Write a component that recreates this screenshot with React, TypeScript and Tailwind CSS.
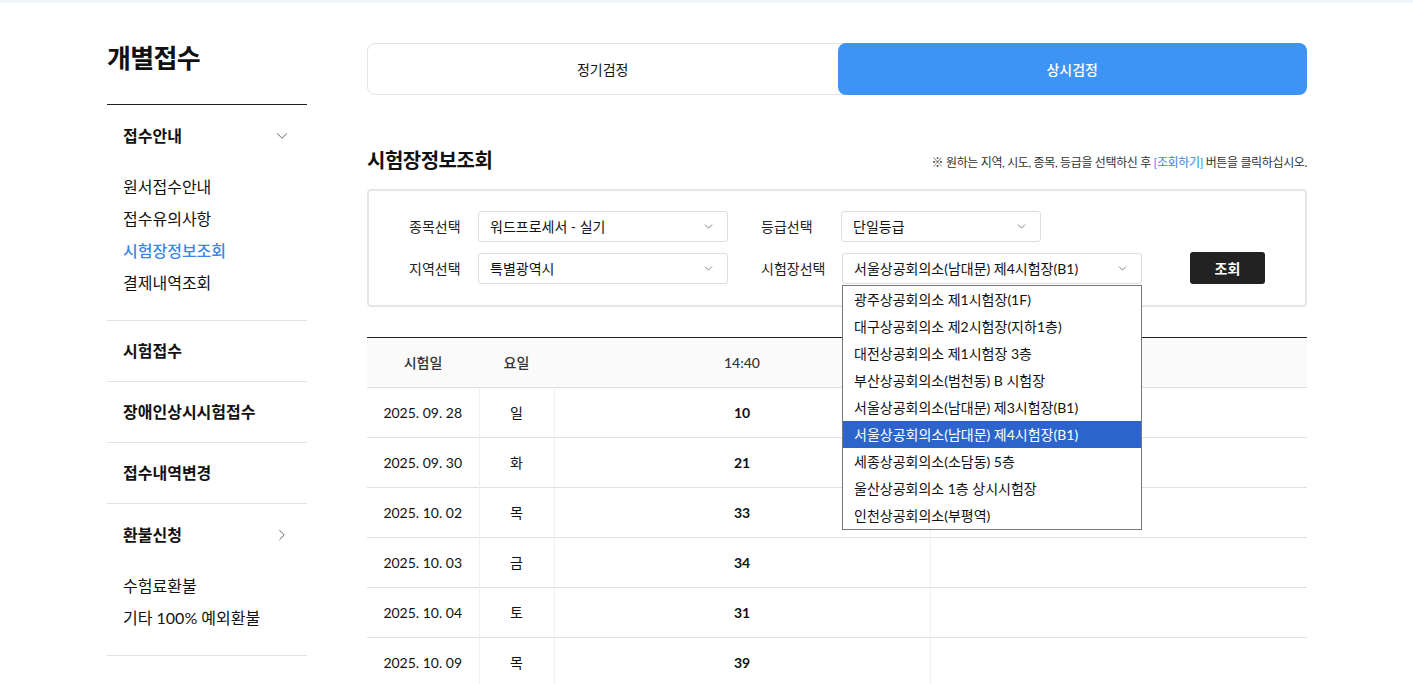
import { ChevronDown, ChevronRight } from "lucide-react";

const subMenu = ["원서접수안내", "접수유의사항", "시험장정보조회", "결제내역조회"];

const places = [
  "광주상공회의소 제1시험장(1F)",
  "대구상공회의소 제2시험장(지하1층)",
  "대전상공회의소 제1시험장 3층",
  "부산상공회의소(범천동) B 시험장",
  "서울상공회의소(남대문) 제3시험장(B1)",
  "서울상공회의소(남대문) 제4시험장(B1)",
  "세종상공회의소(소담동) 5층",
  "울산상공회의소 1층 상시시험장",
  "인천상공회의소(부평역)",
];

const rows = [
  { date: "2025. 09. 28", day: "일", a: "10" },
  { date: "2025. 09. 30", day: "화", a: "21" },
  { date: "2025. 10. 02", day: "목", a: "33" },
  { date: "2025. 10. 03", day: "금", a: "34" },
  { date: "2025. 10. 04", day: "토", a: "31" },
  { date: "2025. 10. 09", day: "목", a: "39" },
];

function SelectBox({ value, width }: { value: string; width: string }) {
  return (
    <div
      className={`flex h-[31px] ${width} items-center justify-between rounded-[3px] border border-[#dddddd] bg-white pl-[11px] pr-[12px] text-[14px] text-[#111]`}
    >
      <span>{value}</span>
      <ChevronDown size={13} strokeWidth={1.5} className="text-[#666]" />
    </div>
  );
}

export default function App() {
  return (
    <div
      className="min-h-[684px] bg-white text-[#111]"
      style={{ fontFamily: "Lato, 'Noto Sans CJK KR', sans-serif" }}
    >
      <div className="h-[3px] bg-[#eef6fd]" />

      <div className="ml-[107px] flex w-[1200px] gap-[60px] pt-[40px]">
        {/* Sidebar */}
        <aside className="w-[200px] shrink-0">
          <h1 className="h-[61px] text-[26px] font-bold leading-[30px] tracking-tight">개별접수</h1>
          <div className="border-t border-[#222]" />

          <div className="flex h-[60px] items-center justify-between pl-[16px] pr-[16px] pt-[1px]">
            <span className="text-[16px] font-bold">접수안내</span>
            <ChevronDown size={18} strokeWidth={1.2} className="text-[#555]" />
          </div>
          <ul className="space-y-[10px] pb-[26px] pl-[16px] pt-[11px] text-[16px] leading-[22px]">
            {subMenu.map((m) => (
              <li key={m} className={m === "시험장정보조회" ? "font-medium text-[#3a86e8]" : ""}>
                {m}
              </li>
            ))}
          </ul>

          {["시험접수", "장애인상시시험접수", "접수내역변경"].map((m) => (
            <div
              key={m}
              className="flex h-[61px] items-center border-t border-[#e2e2e2] pl-[16px] text-[16px] font-bold"
            >
              {m}
            </div>
          ))}

          <div className="border-t border-[#e2e2e2]">
            <div className="flex h-[61px] items-center justify-between pl-[16px] pr-[16px]">
              <span className="text-[16px] font-bold">환불신청</span>
              <ChevronRight size={18} strokeWidth={1.2} className="text-[#555]" />
            </div>
            <ul className="space-y-[10px] pb-[26px] pl-[16px] pt-[10px] text-[16px] leading-[22px]">
              <li>수험료환불</li>
              <li>기타 100% 예외환불</li>
            </ul>
          </div>
          <div className="border-t border-[#e2e2e2]" />
        </aside>

        {/* Main */}
        <main className="w-[940px] shrink-0">
          <div className="flex h-[52px] rounded-[8px] border border-[#e5e5e5]">
            <div className="flex flex-1 items-center justify-center text-[14px]">정기검정</div>
            <div className="-my-px -mr-px flex flex-1 items-center justify-center rounded-[8px] bg-[#3d94f5] text-[14px] font-medium text-white">
              상시검정
            </div>
          </div>

          <div className="mt-[50px] flex items-end justify-between">
            <h2 className="text-[20px] font-bold leading-[30px] tracking-tight">시험장정보조회</h2>
            <p className="pb-[3px] text-[12px] tracking-[-0.03em] text-[#333]">
              ※ 원하는 지역, 시도, 종목, 등급을 선택하신 후{" "}
              <span className="text-[#3d7fe0]">[조회하기]</span> 버튼을 클릭하십시오.
            </p>
          </div>

          <div className="mt-[14px] rounded-[4px] border-2 border-[#e6e6e6] pb-[21px] pl-[40px] pt-[20px]">
            <div className="flex items-center">
              <span className="w-[69px] text-[14px] text-[#222]">종목선택</span>
              <SelectBox value="워드프로세서 - 실기" width="w-[250px]" />
              <span className="ml-[33px] w-[80px] text-[14px] text-[#222]">등급선택</span>
              <SelectBox value="단일등급" width="w-[200px]" />
            </div>
            <div className="mt-[10px] flex items-center">
              <span className="w-[69px] text-[14px] text-[#222]">지역선택</span>
              <SelectBox value="특별광역시" width="w-[250px]" />
              <span className="ml-[33px] w-[81px] text-[14px] text-[#222]">시험장선택</span>
              <div className="relative">
                <SelectBox value="서울상공회의소(남대문) 제4시험장(B1)" width="w-[300px]" />
                <ul className="absolute left-0 top-[32px] z-10 w-[300px] border border-[#777] bg-white text-[14px]">
                  {places.map((p, i) => (
                    <li
                      key={p}
                      className={`flex h-[27px] items-center pl-[11px] ${
                        i === 5 ? "bg-[#2c64cc] text-white" : "text-[#111]"
                      }`}
                    >
                      {p}
                    </li>
                  ))}
                </ul>
              </div>
              <button className="ml-[48px] flex h-[32px] w-[75px] items-center justify-center rounded-[3px] bg-[#222] text-[14px] font-bold text-white">
                조회
              </button>
            </div>
          </div>

          <table className="mt-[30px] w-full table-fixed border-t border-[#222] text-[14px]">
            <colgroup>
              <col className="w-[112px]" />
              <col className="w-[75px]" />
              <col className="w-[376px]" />
              <col />
            </colgroup>
            <thead>
              <tr className="h-[50px] border-b border-[#e0e0e0] bg-[#fafafa] text-[#333]">
                <th className="font-medium">시험일</th>
                <th className="font-medium">요일</th>
                <th className="font-medium">14:40</th>
                <th className="font-medium"></th>
              </tr>
            </thead>
            <tbody>
              {rows.map((r) => (
                <tr key={r.date} className="h-[50px] border-b border-[#e0e0e0] text-center">
                  <td className="border-r border-[#f0f0f0]">{r.date}</td>
                  <td className="border-r border-[#f0f0f0]">{r.day}</td>
                  <td className="border-r border-[#f0f0f0] font-bold">{r.a}</td>
                  <td></td>
                </tr>
              ))}
            </tbody>
          </table>
        </main>
      </div>
    </div>
  );
}
